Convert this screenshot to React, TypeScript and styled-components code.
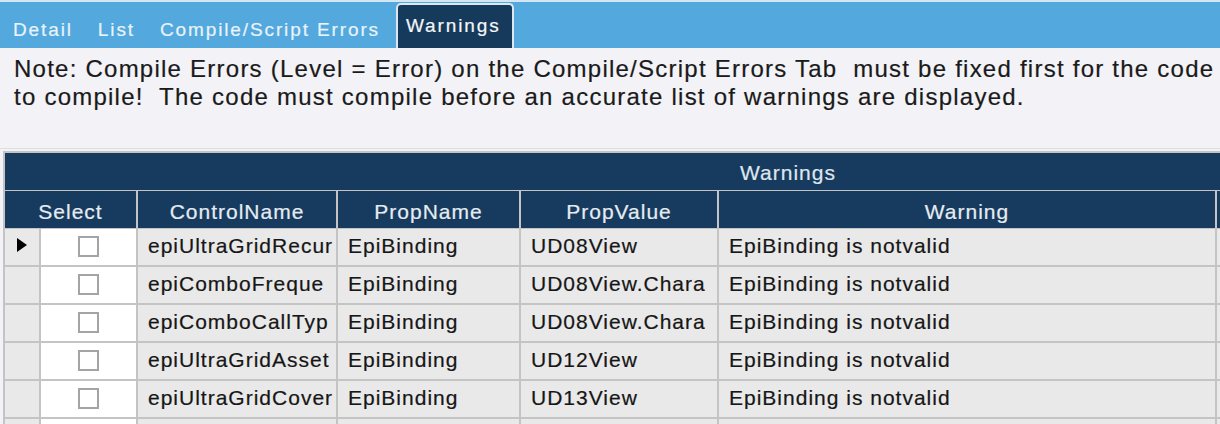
import styled, { createGlobalStyle } from 'styled-components'

const GlobalStyle = createGlobalStyle`
    html, body {
        margin: 0;
        padding: 0;
        background: #f3f3f7;
        overflow: hidden;
    }
    * {
        box-sizing: border-box;
    }
`

const Page = styled.div`
    width: 1220px;
    height: 424px;
    overflow: hidden;
    font-family: "Liberation Sans", Arial, sans-serif;
    background: #f3f3f7;
`

const TabBar = styled.div`
    height: 48px;
    border-top: 2px solid #d3e6f3;
    background: #53a9dd;
    display: flex;
    align-items: flex-end;
`

const Tab = styled.div<{ $active?: boolean }>`
    height: ${p => (p.$active ? '45px' : '46px')};
    margin-left: ${p => (p.$active ? '4px' : '0')};
    padding: ${p => (p.$active ? '10px 11px 0 8px' : '17px 12px 0 13px')};
    font-size: 19px;
    line-height: 22px;
    letter-spacing: 1.88px;
    white-space: nowrap;
    color: ${p => (p.$active ? '#f4f6f8' : '#e9f3fa')};
    background: ${p => (p.$active ? '#163a5c' : 'transparent')};
    border: ${p => (p.$active ? '2px solid #dfe6ee' : 'none')};
    border-bottom: none;
    border-radius: ${p => (p.$active ? '5px 5px 0 0' : '0')};
    -webkit-text-stroke: 0.2px currentColor;
`

const NoteArea = styled.div`
    height: 101px;
    padding: 7px 14px 0;
    border-bottom: 1px solid #dddde2;
    font-size: 24px;
    line-height: 28px;
    letter-spacing: 1.24px;
    color: #1a1a1a;
    white-space: pre;
    -webkit-text-stroke: 0.2px currentColor;
`

const TableWrap = styled.div`
    margin: 2px 0 0 3px;
`

const Grid = styled.div`
    display: grid;
    grid-template-columns: 34px 95px 198px 181px 196px 496px 354px;
    grid-auto-rows: 36px;
    gap: 2px;
    padding: 2px;
    width: max-content;
    background: #c4c4c4;
`

const GroupHeader = styled.div`
    grid-column: 1 / -1;
    height: 37px;
    background: #173b5e;
    color: #dfe6ee;
    font-size: 21px;
    letter-spacing: 1px;
    display: flex;
    align-items: center;
    justify-content: center;
    padding-top: 2px;
    -webkit-text-stroke: 0.2px currentColor;
`

const HeadCell = styled.div<{ $span?: number }>`
    grid-column: span ${p => p.$span ?? 1};
    height: 37px;
    background: #173b5e;
    color: #e6ecf2;
    font-size: 21px;
    letter-spacing: 1px;
    display: flex;
    align-items: center;
    justify-content: center;
    padding-top: 4px;
    white-space: nowrap;
    overflow: hidden;
    -webkit-text-stroke: 0.2px currentColor;
`

const Cell = styled.div<{ $white?: boolean }>`
    background: ${p => (p.$white ? '#ffffff' : '#e9e9e9')};
    color: #161616;
    font-size: 21px;
    letter-spacing: 1px;
    display: flex;
    align-items: center;
    padding: 0 0 3px 10px;
    white-space: nowrap;
    overflow: hidden;
    -webkit-text-stroke: 0.2px currentColor;
`

const SelectorCell = styled.div`
    background: #e9e9e9;
    display: flex;
    align-items: center;
    padding: 0 0 5px 12px;
`

const Arrow = styled.div`
    width: 0;
    height: 0;
    border-top: 7px solid transparent;
    border-bottom: 7px solid transparent;
    border-left: 10px solid #000;
`

const CheckCell = styled.div`
    background: #ffffff;
    display: flex;
    align-items: center;
    justify-content: center;
    padding-bottom: 1px;
`

const CheckBox = styled.div`
    width: 21px;
    height: 21px;
    border: 2px solid #a4a4a4;
    background: #ffffff;
`

type WarningRow = {
    controlName: string
    propName: string
    propValue: string
    warning: string
}

const rows: WarningRow[] = [
    { controlName: 'epiUltraGridRecur', propName: 'EpiBinding', propValue: 'UD08View', warning: 'EpiBinding is notvalid' },
    { controlName: 'epiComboFreque', propName: 'EpiBinding', propValue: 'UD08View.Chara', warning: 'EpiBinding is notvalid' },
    { controlName: 'epiComboCallTyp', propName: 'EpiBinding', propValue: 'UD08View.Chara', warning: 'EpiBinding is notvalid' },
    { controlName: 'epiUltraGridAsset', propName: 'EpiBinding', propValue: 'UD12View', warning: 'EpiBinding is notvalid' },
    { controlName: 'epiUltraGridCover', propName: 'EpiBinding', propValue: 'UD13View', warning: 'EpiBinding is notvalid' },
    { controlName: '', propName: '', propValue: '', warning: '' },
]

const App = () => {
    return (
        <Page>
            <GlobalStyle />
            <TabBar>
                <Tab>Detail</Tab>
                <Tab>List</Tab>
                <Tab>Compile/Script Errors</Tab>
                <Tab $active>Warnings</Tab>
            </TabBar>

            <NoteArea>
                {'Note: Compile Errors (Level = Error) on the Compile/Script Errors Tab  must be fixed first for the code\nto compile!  The code must compile before an accurate list of warnings are displayed.'}
            </NoteArea>

            <TableWrap>
                <Grid>
                    <GroupHeader>Warnings</GroupHeader>

                    <HeadCell $span={2}>Select</HeadCell>
                    <HeadCell>ControlName</HeadCell>
                    <HeadCell>PropName</HeadCell>
                    <HeadCell>PropValue</HeadCell>
                    <HeadCell>Warning</HeadCell>
                    <HeadCell></HeadCell>

                    { rows.map((row, i) => (
                        <div key={i} style={{ display: 'contents' }}>
                            <SelectorCell>{ i === 0 && <Arrow /> }</SelectorCell>
                            <CheckCell><CheckBox /></CheckCell>
                            <Cell>{ row.controlName }</Cell>
                            <Cell>{ row.propName }</Cell>
                            <Cell>{ row.propValue }</Cell>
                            <Cell>{ row.warning }</Cell>
                            <Cell></Cell>
                        </div>
                    )) }
                </Grid>
            </TableWrap>
        </Page>
    )
}

export default App
